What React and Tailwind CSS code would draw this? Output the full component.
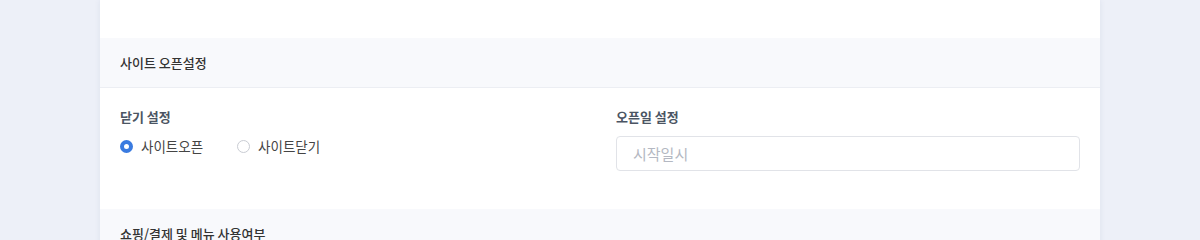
const Radio = ({ checked, label }) => {
  return (
    <label className="flex items-center gap-[8px] cursor-pointer">
      {checked ? (
        <span className="w-[13px] h-[13px] rounded-full border-[4px] border-[#3a7be0] bg-white" />
      ) : (
        <span className="w-[13px] h-[13px] rounded-full border border-[#c9ccd3] bg-white" />
      )}
      <span className="text-[13.5px] text-[#444] leading-[17px]">{label}</span>
    </label>
  );
};

const SectionHeader = ({ title }) => {
  return (
    <div className="h-[50px] bg-[#f8f9fc] border-b border-[#eceef3] px-5 flex items-center">
      <h2 className="text-[13px] font-medium text-[#333]">{title}</h2>
    </div>
  );
};

export default function App() {
  return (
    <div
      className="min-h-[239px] w-full bg-[#edf0f8] px-[100px] overflow-hidden"
      style={{ fontFamily: '"Noto Sans CJK KR", "Noto Sans", sans-serif' }}
    >
      <div className="bg-white shadow-[0_0_6px_rgba(40,60,120,0.08)]">
        <div className="h-[38px]" />

        <SectionHeader title="사이트 오픈설정" />

        <div className="px-5 pt-5 pb-[38px] grid grid-cols-2 gap-8">
          <div>
            <div className="text-[13px] font-bold text-[#4b5563] leading-[18px]">닫기 설정</div>
            <div className="mt-3 flex items-center gap-[34px]">
              <Radio checked label="사이트오픈" />
              <Radio label="사이트닫기" />
            </div>
          </div>
          <div>
            <div className="text-[13px] font-bold text-[#4b5563] leading-[18px]">오픈일 설정</div>
            <input
              type="text"
              placeholder="시작일시"
              className="mt-[10px] w-full h-[35px] rounded border border-[#e1e3e8] px-4 text-[15px] text-[#333] placeholder:text-[#b4b8c2] outline-none"
            />
          </div>
        </div>

        <SectionHeader title="쇼핑/결제 및 메뉴 사용여부" />
      </div>
    </div>
  );
}
